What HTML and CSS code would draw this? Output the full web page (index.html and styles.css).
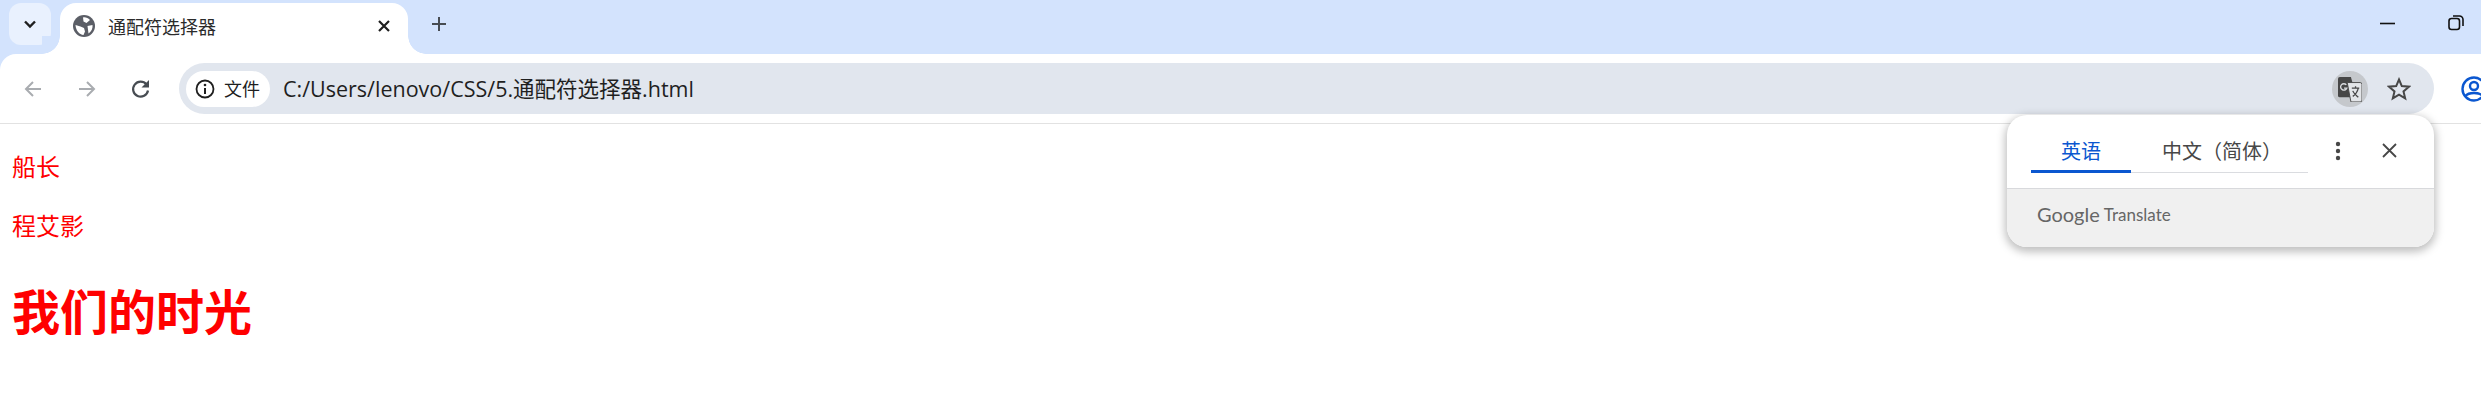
FILE: index.html
```html
<!DOCTYPE html>
<html lang="zh-CN">
<head>
    <meta charset="UTF-8">
    <title>通配符选择器</title>
    <link rel="stylesheet" href="styles.css">
</head>
<body>
    <header class="browser">
        <div class="tabstrip">
            <button class="tab-search">
                <svg width="18" height="18" viewBox="0 0 18 18"><path d="M4 6.500l5 5 5-5" fill="none" stroke="#1f1f1f" stroke-width="2.400"/></svg>
            </button>
            <div class="tab">
                <svg class="globe" width="22" height="22" viewBox="0 0 22 22">
                    <circle cx="11" cy="11" r="11" fill="#5b5e66"/>
                    <path d="M10 2.500c2.500-.5 5 .5 7 2.500l-3.500 3-3-1.500zM2.500 10l5 1.500 3.500 1.500 1 3.500-1.500 3.500c-4-.5-7.500-4-8-10zM14.500 11l5-1c.5 3-1 6.500-4 8.500z" fill="#fff"/>
                </svg>
                <span class="tab-title">通配符选择器</span>
                <svg class="tab-close" width="14" height="14" viewBox="0 0 14 14"><path d="M2 2l10 10M12 2L2 12" stroke="#1f1f1f" stroke-width="2.200"/></svg>
            </div>
            <svg class="new-tab" width="16" height="16" viewBox="0 0 16 16"><path d="M8 1v14M1 8h14" stroke="#474c52" stroke-width="2"/></svg>
            <div class="window-controls">
                <svg width="15" height="15" viewBox="0 0 15 15"><path d="M0 7.500h15" stroke="#111" stroke-width="1.600"/></svg>
                <svg width="16" height="16" viewBox="0 0 16 16"><rect x="1" y="3.500" width="10.500" height="11" rx="2.500" fill="none" stroke="#111" stroke-width="1.600"/><path d="M5 1h6.500a3.500 3.500 0 0 1 3.500 3.500v6.500" fill="none" stroke="#111" stroke-width="1.600"/></svg>
            </div>
        </div>
        <div class="toolbar">
            <svg class="nav-icon" width="20" height="20" viewBox="0 0 20 20"><path d="M18 10H3M10 3l-7 7 7 7" fill="none" stroke="#a9acb0" stroke-width="2"/></svg>
            <svg class="nav-icon" width="20" height="20" viewBox="0 0 20 20"><path d="M2 10h15M10 3l7 7-7 7" fill="none" stroke="#a9acb0" stroke-width="2"/></svg>
            <svg class="nav-icon reload" width="20" height="20" viewBox="0 0 20 20"><path d="M17 11.500a7.500 7.500 0 1 1-1.500-6" fill="none" stroke="#474c52" stroke-width="2.200"/><path d="M18 1v7.500h-7.500z" fill="#474c52"/></svg>
            <div class="omnibox">
                <div class="chip">
                    <svg width="20" height="20" viewBox="0 0 20 20"><circle cx="10" cy="10" r="8.500" fill="none" stroke="#1f1f1f" stroke-width="1.800"/><path d="M10 9v6" stroke="#1f1f1f" stroke-width="2"/><circle cx="10" cy="6" r="1.300" fill="#1f1f1f"/></svg>
                    <span class="chip-label">文件</span>
                </div>
                <span class="url">C:/Users/lenovo/CSS/5.通配符选择器.html</span>
                <div class="translate-btn">
                    <svg width="26" height="28" viewBox="0 0 26 28">
                        <path d="M2 1h12l6 22H2a2 2 0 0 1-2-2V3a2 2 0 0 1 2-2z" fill="#474747"/>
                        <path d="M10 7h14a2 2 0 0 1 2 2v17a2 2 0 0 1-2 2H14z" fill="#e3e5e8" stroke="#474747" stroke-width="1"/>
                        <path d="M9 9.500a3.500 3.500 0 1 0 .6 3.500H6.500" fill="none" stroke="#d8dadd" stroke-width="1.500"/>
                        <path d="M15 13h8M19 11v2M22 13c-1 4-3 7-6 9M16 16c1 3 4 5 6 7" fill="none" stroke="#474747" stroke-width="1.400"/>
                    </svg>
                </div>
                <svg class="star" width="24" height="24" viewBox="0 0 24 24"><path d="M12 2.500l2.800 6.600 7.200.6-5.500 4.700 1.700 7-6.200-3.700-6.200 3.700 1.700-7L2 9.700l7.200-.6z" fill="none" stroke="#474747" stroke-width="2"/></svg>
            </div>
            <svg class="profile" width="26" height="26" viewBox="0 0 26 26"><circle cx="13" cy="13" r="11.500" fill="none" stroke="#0b57d0" stroke-width="2.400"/><circle cx="13" cy="10" r="4" fill="none" stroke="#0b57d0" stroke-width="2.400"/><path d="M4.500 20c3-4 14-4 17 0" fill="none" stroke="#0b57d0" stroke-width="2.400"/></svg>
        </div>
    </header>

    <main class="page">
        <p>船长</p>
        <p>程艾影</p>
        <h1>我们的时光</h1>
    </main>

    <div class="translate-popup">
        <div class="popup-top">
            <div class="lang-tabs">
                <span class="lang-tab active">英语</span>
                <span class="lang-tab">中文（简体）</span>
            </div>
            <svg class="popup-more" width="6" height="20" viewBox="0 0 6 20"><circle cx="3" cy="3" r="2.200" fill="#474747"/><circle cx="3" cy="10" r="2.200" fill="#474747"/><circle cx="3" cy="17" r="2.200" fill="#474747"/></svg>
            <svg class="popup-close" width="15" height="15" viewBox="0 0 15 15"><path d="M1 1l13 13M14 1L1 14" stroke="#474747" stroke-width="1.800"/></svg>
        </div>
        <div class="popup-bottom">
            <span class="google">Google</span>
            <span class="translate-word">Translate</span>
        </div>
    </div>
</body>
</html>
```

FILE: styles.css
```css
html, body {
    margin: 0;
    padding: 0;
    height: 418px;
    overflow: hidden;
    background-color: white;
}
body {
    font-family: "Noto Sans CJK SC", sans-serif;
    position: relative;
}
.browser {
    background-color: #d3e3fd;
}
.tabstrip {
    display: flex;
    align-items: flex-start;
    height: 54px;
    padding-top: 3px;
    padding-left: 9px;
    box-sizing: border-box;
}
.tab-search {
    width: 42px;
    height: 42px;
    padding: 0;
    border: none;
    border-radius: 12px;
    background-color: #e9f1fe;
    display: flex;
    align-items: center;
    justify-content: center;
}
.tab {
    position: relative;
    display: flex;
    align-items: center;
    width: 348px;
    height: 51px;
    margin-left: 9px;
    padding: 0 17px 6px 13px;
    box-sizing: border-box;
    background-color: white;
    border-radius: 16px 16px 0 0;
}
.tab::before,
.tab::after {
    content: "";
    position: absolute;
    bottom: 0;
    width: 18px;
    height: 18px;
}
.tab::before {
    left: -18px;
    background: radial-gradient(circle at 0 0, #d3e3fd 17.500px, white 18px);
}
.tab::after {
    right: -18px;
    background: radial-gradient(circle at 100% 0, #d3e3fd 17.500px, white 18px);
}
.globe {
    flex: none;
}
.tab-title {
    margin-left: 13px;
    flex: 1;
    font-size: 18px;
    color: #2b2b2b;
}
.new-tab {
    margin-left: 23px;
    margin-top: 13px;
}
.window-controls {
    display: flex;
    align-items: center;
    gap: 53px;
    margin-left: auto;
    margin-right: 17px;
    margin-top: 12px;
}
.toolbar {
    display: flex;
    align-items: center;
    height: 70px;
    padding-left: 23px;
    box-sizing: border-box;
    background-color: white;
    border-radius: 16px 0 0 0;
    border-bottom: 1px solid #e2e2e2;
}
.nav-icon {
    flex: none;
    margin-right: 34px;
}
.nav-icon.reload {
    margin-right: 28px;
}
.omnibox {
    flex: none;
    display: flex;
    align-items: center;
    width: 2255px;
    height: 51px;
    padding-left: 7px;
    padding-right: 23px;
    box-sizing: border-box;
    background-color: #e1e6ee;
    border-radius: 26px;
}
.chip {
    display: flex;
    align-items: center;
    gap: 9px;
    width: 84px;
    height: 36px;
    padding-left: 9px;
    box-sizing: border-box;
    background-color: white;
    border-radius: 18px;
    font-size: 18px;
    color: #1f1f1f;
}
.chip-label {
    padding-bottom: 2px;
}
.url {
    flex: 1;
    margin-left: 13px;
    padding-bottom: 2px;
    font-family: "Open Sans", "Noto Sans CJK SC", sans-serif;
    font-size: 21.500px;
    color: #1f1f1f;
}
.translate-btn {
    display: flex;
    align-items: center;
    justify-content: center;
    width: 36px;
    height: 36px;
    border-radius: 50%;
    background-color: #c5c8cc;
    overflow: hidden;
}
.translate-btn svg {
    width: 24px;
    height: 26px;
}
.star {
    margin-left: 19px;
}
.profile {
    flex: none;
    margin-left: 27px;
}
.page {
    padding: 0 12px;
    color: red;
}
.page p {
    margin: 0;
    height: 59px;
    font-size: 24px;
    line-height: 59px;
}
.page p:first-child {
    margin-top: 12px;
}
.page h1 {
    margin: 25px 0 0;
    font-size: 48px;
    line-height: 60px;
}
.translate-popup {
    position: absolute;
    left: 2007px;
    top: 115px;
    width: 427px;
    height: 132px;
    overflow: hidden;
    background-color: white;
    border-radius: 20px;
    box-shadow: 0 3px 8px 2px rgba(0, 0, 0, 0.25);
}
.popup-top {
    display: flex;
    align-items: center;
    height: 74px;
    padding-left: 24px;
    padding-bottom: 2px;
    box-sizing: border-box;
    border-bottom: 1px solid #d8d9dc;
}
.lang-tabs {
    display: flex;
    align-self: flex-start;
    width: 277px;
    height: 58px;
    box-sizing: border-box;
    border-bottom: 1px solid #dadce0;
}
.lang-tab {
    height: 58px;
    line-height: 72px;
    font-size: 20px;
    color: #474747;
    white-space: nowrap;
    box-sizing: border-box;
}
.lang-tab.active {
    width: 100px;
    text-align: center;
    color: #0b57d0;
    border-bottom: 3px solid #0b57d0;
}
.lang-tab:last-child {
    margin-left: 31px;
}
.popup-more {
    margin-left: 27px;
}
.popup-close {
    margin-left: 41px;
}
.popup-bottom {
    display: flex;
    align-items: center;
    gap: 4px;
    height: 58px;
    padding-left: 30px;
    padding-bottom: 8px;
    box-sizing: border-box;
    background-color: #f0f0f0;
    color: #666;
}
.google {
    font-family: "Lato", sans-serif;
    font-size: 20px;
}
.translate-word {
    font-family: "Lato", sans-serif;
    font-size: 17px;
}
```
